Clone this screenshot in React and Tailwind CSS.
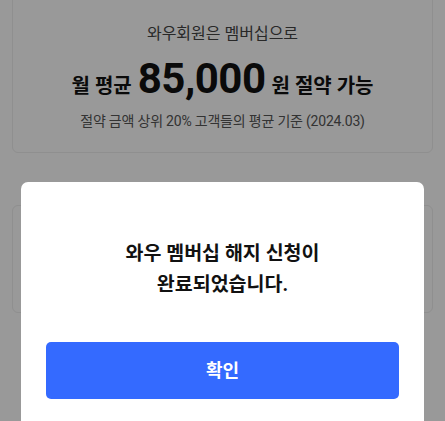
import React from 'react';

const FONT = { fontFamily: '"Roboto", "Noto Sans CJK KR", sans-serif' };

const SavingsCard = () => (
    <div className="mx-3 -mt-4 border border-[#eeeeee] rounded-md pt-[38px] pb-[21px] flex flex-col items-center">
        <p className="text-[16px] leading-[22px] text-[#444444]">와우회원은 멤버십으로</p>
        <div className="mt-[11px] flex items-baseline gap-[6px] text-[#111111] font-bold">
            <span className="text-[20px]">월 평균</span>
            <span className="text-[42px] leading-[46px] tracking-[-0.5px]">85,000</span>
            <span className="text-[20px]">원 절약 가능</span>
        </div>
        <p className="mt-[9px] text-[14px] leading-[20px] text-[#555555] tracking-[-0.2px]">
            절약 금액 상위 20% 고객들의 평균 기준 (2024.03)
        </p>
    </div>
);

const CancelDoneModal = () => (
    <div className="fixed inset-0 bg-black/40 flex flex-col items-center pt-[182px] px-[21px]">
        <div className="w-full flex-1 bg-white rounded-t-[7px] flex flex-col items-center pt-[56px]">
            <h2 className="text-[19.5px] leading-[31px] font-bold text-[#111111] text-center">
                와우 멤버십 해지 신청이
                <br />
                완료되었습니다.
            </h2>
            <button
                type="button"
                className="mt-[42px] w-[353px] h-[57px] rounded-[5px] bg-[#346aff] text-white text-[18px] font-bold"
            >
                확인
            </button>
        </div>
    </div>
);

const App = () => {
    return (
        <div className="relative min-h-[421px] bg-white overflow-hidden" style={FONT}>
            <SavingsCard />
            <div className="mx-3 mt-[52px] h-[108px] border border-[#eeeeee] rounded-md" />
            <CancelDoneModal />
        </div>
    );
};

export default App;
